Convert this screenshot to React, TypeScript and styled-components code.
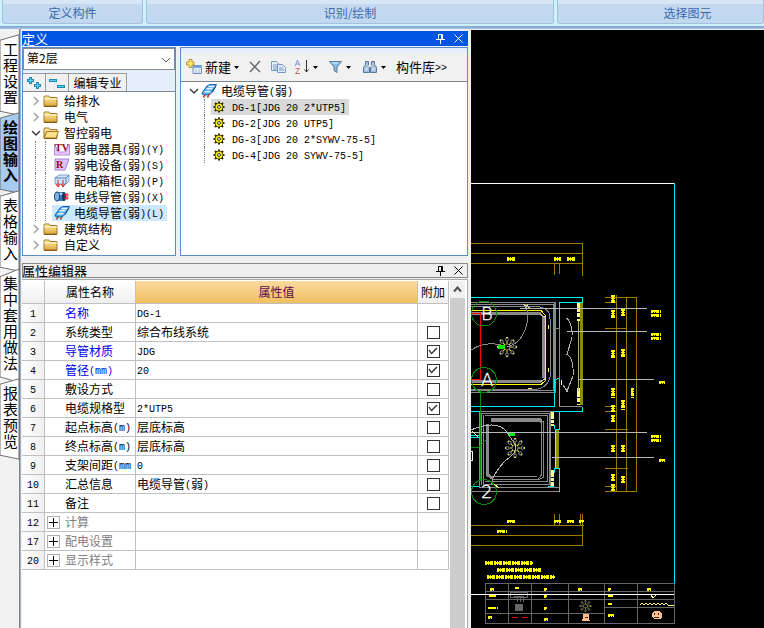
import React from 'react';
import styled, { createGlobalStyle, css } from 'styled-components';

const Global = createGlobalStyle`
  * { box-sizing: border-box; }
  body { margin: 0; background: #f0f0f0; color: #000; font: 12px/16px "Noto Sans CJK SC", sans-serif; overflow: hidden; }
  button, select, input { font: inherit; color: inherit; margin: 0; padding: 0; border: 0; background: none; }
`;

const Page = styled.div`display: flex; flex-direction: column; height: 100vh;`;
const Ribbon = styled.header`
  display: flex; gap: 3px; flex: none; height: 29px; padding: 0 0 3px 2px;
  background: linear-gradient(#cdf2fc 26px, #7da2ce 26px, #a9c4e4 29px);
`;
const RibbonGroup = styled.div<{ $basis: number; $grow?: boolean; $indent?: number }>`
  flex: ${p => (p.$grow ? '1 0' : '0 0')} ${p => p.$basis}px;
  height: 24px; padding: 4px 0 0 ${p => p.$indent || 0}px; text-align: center; line-height: 18px;
  color: #3b69b0; white-space: nowrap; overflow: hidden;
  border: solid #a3c0de; border-width: 0 1px 1px; border-radius: 0 0 3px 3px;
  background: linear-gradient(#d6e6f4 4px, #c1d8ef 4px);
`;
const Body = styled.div`display: flex; flex: 1; min-height: 0;`;

const Rail = styled.nav`
  flex: none; width: 20px; padding-top: 5px; border-right: 1px solid #808080;
  background: repeating-conic-gradient(#f7f7f7 0 25%, #ececec 0 50%) 0 0 / 2px 2px;
`;
const RailTab = styled.button<{ $active?: boolean }>`
  position: relative; display: block; width: 19px; padding: 7px 0 7px 3px;
  font-size: 15px; line-height: 16px; text-align: left; font-weight: ${p => (p.$active ? 700 : 400)};
  svg { position: absolute; inset: 0; width: 100%; height: 100%; overflow: visible; fill: ${p => (p.$active ? '#a6caf0' : '#fff')}; }
  span { position: relative; display: block; width: 16px; word-break: break-all; white-space: normal; }
`;

const Dock = styled.section`
  display: flex; flex-direction: column; flex: 0 0 451px; min-width: 0; padding: 2px 3px 0 1px;
  background: #f0f0f0; border-left: 1px solid #9db4d4;
`;
const TitleBar = styled.div<{ $active?: boolean }>`
  display: flex; align-items: center; flex: none; gap: 5px; padding-right: 3px; font-size: 13px; line-height: 15px; height: 15px;
  ${p => p.$active ? css`background: #0055e5; color: #fff;` : css`
    margin-top: 7px; background: #efefef; outline: 1px solid #8a8a8a; outline-offset: -1px;
  `}
  h2 { flex: 1; margin: 0; font: inherit; line-height: 13px; }
  button { display: flex; padding: 1px; }
`;
const Panes = styled.div`display: flex; gap: 4px; flex: none; height: 209px; margin-top: 1px;`;
const Pane = styled.div<{ $width?: number }>`
  display: flex; flex-direction: column; border: 1px solid #5a8cc8; min-width: 0; background: #e4eefc;
  flex: ${p => (p.$width ? `0 0 ${p.$width}px` : '1')};
`;
const Combo = styled.div`
  position: relative; flex: none; height: 22px; border: 1px solid #8c8c8c; background: #fff;
  select { width: 100%; height: 18px; padding-left: 3px; appearance: none; outline: 0; }
  svg { position: absolute; right: 3px; top: 8px; pointer-events: none; }
`;
const MiniBar = styled.div`display: flex; height: 18px; margin-top: 3px; flex: none;`;
const MiniButton = styled.button<{ $wide?: boolean }>`
  display: flex; align-items: center; justify-content: center; width: ${p => (p.$wide ? 58 : 23)}px;
  border: solid #9a9a9a; border-width: 1px 1px 0 0; background: #f0f0f0; white-space: nowrap; overflow: hidden; line-height: 17px;
`;
const Tree = styled.ul`
  flex: 1; margin: 0; padding: 1px 0; list-style: none; background: #fff; border-top: 1px solid #7f8790; overflow: hidden;
`;
const Node = styled.li`display: flex; align-items: center; height: 16px; padding-left: 7px;`;
const Guide = styled.i<{ $gap: number }>`
  width: ${p => p.$gap}px; height: 16px; border-left: 1px dotted #808080;
`;
const NodeButton = styled.button<{ $bg?: string; $gap?: number }>`
  display: flex; align-items: center; gap: ${p => p.$gap || 4}px; height: 16px; padding: 0 3px 0 2px; white-space: pre; line-height: 16px;
  background: ${p => p.$bg || 'none'};
  svg { flex: none; }
`;
const Twist = styled.span<{ $w?: number }>`display: flex; width: ${p => p.$w || 11}px; justify-content: center;`;

const Toolbar = styled.div`
  display: flex; align-items: center; flex: none; height: 28px; margin-top: 5px; padding-left: 5px; background: #f1f1f1;
`;
const Tool = styled.button<{ $w: number }>`
  display: flex; align-items: center; gap: 3px; width: ${p => p.$w}px; white-space: nowrap; font-size: 13px;
  svg { flex: none; }
`;

const GridArea = styled.div`
  display: flex; flex: 1; min-height: 0; margin-top: 1px; padding-right: 2px; background: #fff; border: solid #a8a8a8; border-width: 1px 1px 0 0;
`;
const Grid = styled.table`
  flex: 1; align-self: flex-start; margin-top: 1px; border-collapse: separate; border-spacing: 0; table-layout: fixed; width: 426px;
  th, td { height: 19px; padding: 0; border: solid #c0c0c0; border-width: 0 1px 1px 0; font-weight: 400; line-height: 16px; white-space: nowrap; overflow: hidden; }
  thead th { height: 23px; background: linear-gradient(#fff, #efefef); }
  thead th:nth-child(3) { background: linear-gradient(#fbd9a0, #f0c060); color: #5b0a4e; }
  tbody th { background: linear-gradient(90deg, #fff, #efefef); text-align: center; }
  td:nth-child(3) { padding-left: 1px; }
  td:last-child { text-align: center; }
`;
const NameCell = styled.div<{ $tone?: string }>`
  display: flex; align-items: center; height: 16px; padding-left: ${p => (p.$tone === 'group' ? 2 : 20)}px;
  color: ${p => (p.$tone === 'key' ? '#0000f0' : p.$tone === 'group' ? '#808080' : '#000')};
`;
const Expand = styled.button`
  display: flex; align-items: center; justify-content: center; width: 13px; height: 13px; margin-right: 5px; border: 1px solid #b0b0b0; flex: none;
`;
const Check = styled.input`
  display: block; width: 13px; height: 13px; border: 1px solid #333; appearance: none; background: #fff;
  &:checked::after {
    content: ''; display: block; width: 11px; height: 11px; background: #333;
    clip-path: polygon(1px 5px, 2px 4px, 4px 7px, 9px 2px, 10px 3px, 4px 9px);
  }
`;
const CheckCell = styled.div`display: flex; align-items: center; justify-content: center; height: 18px;`;
const ScrollTrack = styled.div`
  flex: 0 0 15px; margin: 1px 0 0 1px; background: #cdcdcd;
  button { display: flex; width: 15px; height: 17px; align-items: center; justify-content: center; background: #f0f0f0; }
`;
const Canvas = styled.main`flex: 1; min-width: 0; margin-top: 1px; background: #000; overflow: hidden; svg { display: block; }`;
const Latin = styled.span`padding-top: 3px; font: 10px/10px "Liberation Mono", monospace; white-space: pre;`;
const Run = styled.span`display: flex; align-items: center; height: 16px; line-height: 16px;`;
const Numeral = styled(Run)`justify-content: center;`;

const Mixed = ({ text, as: Wrap = Run }: { text: string; as?: React.ElementType }) => (
  <Wrap>{text.split(/([\x20-\x7e]+)/).filter(Boolean).map((part, i) =>
    /^[\x20-\x7e]/.test(part) ? <Latin key={i}>{part}</Latin> : <span key={i}>{part}</span>)}</Wrap>
);

const Chevron = ({ open }: { open?: boolean }) => (
  <svg width="10" height="10" fill="none" stroke={open ? '#404040' : '#a0a0a0'} strokeWidth="1.5">
    <path d={open ? 'M1 3l4 4 4-4' : 'M3 1l4 4-4 4'} />
  </svg>
);
const Folder = ({ open }: { open?: boolean }) => (
  <svg width="16" height="14" viewBox="0 0 16 14">
    <defs><linearGradient id="fold" x2="0" y2="1"><stop stopColor="#fff0b0" /><stop offset="1" stopColor="#dba63c" /></linearGradient></defs>
    <path d="M1 12V3q0-1 1-1h4l1 1.500h7v8.500z" fill="url(#fold)" stroke="#a37520" />
    {open ? <path d="M1 12l3-6.500h11.500L13 12z" fill="#ffe08a" stroke="#a37520" />
      : <path d="M1 5h13" stroke="#fff4c8" />}
    <path d="M1 12.500h13" stroke="#8a5b14" />
  </svg>
);
const Gear = () => (
  <svg width="12" height="12" viewBox="0 0 12 12">
    <circle cx="6" cy="6" r="4" fill="#f4ec20" stroke="#444400" />
    <path d="M6 .5v11M.5 6h11M2 2l8 8M10 2l-8 8" stroke="#2c2c00" strokeWidth="2" />
    <circle cx="6" cy="6" r="3.500" fill="#ffee20" />
    <circle cx="6" cy="6" r="1.500" fill="#fff" stroke="#333" />
  </svg>
);
const Tray = () => (
  <svg width="16" height="14" viewBox="0 0 16 14">
    <path d="M1 9L6 2 9 .5h6.500L11.500 8 8 11H2z" fill="#4fa8ea" stroke="#1d5fae" />
    <path d="M5.500 5l6-.5M3.500 8l6-.5M7.500 2.500h6" stroke="#e9f7ff" strokeWidth="1.500" />
    <path d="M11 8l4-6" stroke="#123f80" />
    <path d="M4 10l-1 3.500M8 10l-1 3.500M2 12l1 1.500M6 12l1 1.500" stroke="#e02020" fill="none" />
  </svg>
);
const Device = ({ kind }: { kind: 'tv' | 'r' | 'box' | 'wire' | 'tray' }) => {
  if (kind === 'tray') return <Tray />;
  const letter = { fill: '#a00010', fontFamily: '"Liberation Serif", serif', fontWeight: 700, fontSize: 10 };
  return (
    <svg width="16" height="14" viewBox="0 0 16 14">
      {kind === 'tv' && <><path d="M.5 2v11h15V2l-4 8H4z" fill="#e6c8fa" stroke="#b888dc" /><text x="1" y="9" {...letter}>TV</text></>}
      {kind === 'r' && <><path d="M1 1h14l-4 11H1z" fill="#dcc0fa" stroke="#a884d0" /><text x="2" y="10" {...letter}>R</text></>}
      {kind === 'box' && <>
        <path d="M1 4l4-3h10v6l-3 3H1z" fill="#cfe4fa" stroke="#7f9fc8" /><path d="M1 4h11v6M12 4l3-3" fill="none" stroke="#5b80b8" />
        <path d="M4 6v7M9 6v7M2 10l2 3 2-3M7 10l2 3 2-3" fill="none" stroke="#e02020" />
      </>}
      {kind === 'wire' && <>
        <path d="M3 2h7v9H3z" fill="#3c78b8" /><path d="M3 4h7" stroke="#b8dcf8" strokeWidth="2" />
        <ellipse cx="3" cy="6.500" rx="2.500" ry="4.500" fill="#7ab2e6" stroke="#183c70" /><ellipse cx="10" cy="6.500" rx="2" ry="4.500" fill="#123a68" />
        <path d="M10 5h5M10 8h5M13 3v7" stroke="#f02020" />
      </>}
    </svg>
  );
};
const Pin = () => <svg width="11" height="11" fill="none" stroke="currentColor"><path d="M3.500 6V1.500h4V6M1 6.500h9M5.500 6.500V11M6.500 2v4" /></svg>;
const Close = () => <svg width="11" height="11" stroke="currentColor"><path d="M1.500 1.500l8 8M9.500 1.500l-8 8" /></svg>;
const Caret = () => <svg width="5" height="3"><path d="M0 0h5L2.500 3z" fill="#000" /></svg>;

const NewIcon = () => (
  <svg width="16" height="16" viewBox="0 0 16 16">
    <path d="M7 6.500h8.500v8H7z" fill="#e4eef9" stroke="#6b90c0" /><path d="M7 8h9" stroke="#7ba4d8" strokeWidth="2" />
    <path d="M9 11h2M12 11h2M9 13h2M12 13h2" stroke="#a6bedc" />
    <path d="M3 .5h3V3h2v3H6v2.500H3V6H.5V3H3z" fill="#ffe774" stroke="#b59530" />
  </svg>
);
const DeleteIcon = () => <svg width="14" height="14" stroke="#6d6d6d" strokeWidth="1.500"><path d="M2 2l10 10M12 1L2 12" /></svg>;
const CopyIcon = () => (
  <svg width="16" height="14" viewBox="0 0 16 14" fill="#e3edf9" stroke="#7898c4">
    <path d="M.5 1.500h5l3 3v6h-8z" /><path d="M2 5h4M2 7h4M2 9h4" /><path d="M6.500 4.500h5l3 3v5h-8z" /><path d="M8 8h4M8 10h5" />
  </svg>
);
const SortIcon = () => (
  <svg width="16" height="16" viewBox="0 0 16 16" fill="none">
    <path d="M1 7l2.500-6L6 7M2 5h3" stroke="#7c9bc8" /><path d="M1.500 9.500h4l-4 5h4.500" stroke="#c86e70" />
    <path d="M12.500 1v12M10.500 10.500l2 2.500 2-2.500" stroke="#303030" />
  </svg>
);
const FilterIcon = () => <svg width="14" height="14"><path d="M.5 1.500h12L8 7v5.500l-3-2V7z" fill="#88bce0" stroke="#557da5" /><path d="M3 3h6" stroke="#e0f2ff" /></svg>;
const FindIcon = () => (
  <svg width="16" height="14" viewBox="0 0 16 14" fill="#a8c0e0" stroke="#57759f">
    <path d="M3.500 1.500h3v4l1 2v5h-6v-5l2-3zM9.500 1.500h3v3l2 3v5h-6v-5l1-2z" /><path d="M6 6h4M3 9h3M10 9h3" stroke="#eef5ff" />
  </svg>
);

const railTabs = ['工程设置', '绘图输入', '表格输入', '集中套用做法', '报表预览'];
const leaves: [React.ComponentProps<typeof Device>['kind'], string][] = [
  ['tv', '弱电器具(弱)(Y)'], ['r', '弱电设备(弱)(S)'], ['box', '配电箱柜(弱)(P)'], ['wire', '电线导管(弱)(X)'], ['tray', '电缆导管(弱)(L)'],
];
const parts = ['DG-1[JDG 20 2*UTP5]', 'DG-2[JDG 20 UTP5]', 'DG-3[JDG 20 2*SYWV-75-5]', 'DG-4[JDG 20 SYWV-75-5]'];
const rows: { n: number; name: string; value?: string; tone?: string; check?: boolean }[] = [
  { n: 1, name: '名称', value: 'DG-1', tone: 'key' },
  { n: 2, name: '系统类型', value: '综合布线系统', check: false },
  { n: 3, name: '导管材质', value: 'JDG', tone: 'key', check: true },
  { n: 4, name: '管径(mm)', value: '20', tone: 'key', check: true },
  { n: 5, name: '敷设方式', check: false },
  { n: 6, name: '电缆规格型', value: '2*UTP5', check: true },
  { n: 7, name: '起点标高(m)', value: '层底标高', check: false },
  { n: 8, name: '终点标高(m)', value: '层底标高', check: false },
  { n: 9, name: '支架间距(mm', value: '0', check: false },
  { n: 10, name: '汇总信息', value: '电缆导管(弱)', check: false },
  { n: 11, name: '备注', check: false },
  { n: 12, name: '计算', tone: 'group' },
  { n: 17, name: '配电设置', tone: 'group' },
  { n: 20, name: '显示样式', tone: 'group' },
];

const FolderNode = ({ label, open }: { label: string; open?: boolean }) => (
  <Node>
    <Twist><Chevron open={open} /></Twist>
    <NodeButton $gap={5}><Folder open={open} />{label}</NodeButton>
  </Node>
);

/* Tiny annotations on the plan: [x, y, length, vertical, thickness] */
const marks: [number, number, number, boolean, number][] = [
  [507, 259, 9, false, 4], [554, 259, 7, false, 4], [567, 259, 8, false, 4],
  [613, 295, 8, true, 4], [613, 310, 9, true, 4], [613, 350, 8, true, 4], [613, 388, 10, true, 4],
  [623, 309, 7, true, 4], [623, 349, 9, true, 4], [632, 388, 10, true, 3], [623, 400, 10, true, 4],
  [613, 405, 7, true, 4], [613, 415, 7, true, 4], [613, 445, 7, true, 4], [623, 445, 7, true, 4],
  [613, 474, 7, true, 4], [613, 484, 7, true, 4], [623, 476, 7, true, 4],
  [651, 311, 10, false, 3], [651, 315, 10, false, 3], [651, 334, 10, false, 3], [651, 338, 10, false, 3],
  [659, 382, 6, false, 3], [651, 436, 10, false, 3], [651, 440, 10, false, 3], [659, 460, 6, false, 3],
  [507, 521, 9, false, 3], [554, 521, 7, false, 3], [567, 521, 7, false, 3], [579, 521, 5, false, 3], [497, 531, 10, false, 3],
  [485, 563, 48, false, 4], [497, 570, 44, false, 4], [487, 577, 68, false, 4],
  [490, 589, 4, false, 3], [515, 588, 4, false, 2], [544, 589, 3, false, 3], [578, 589, 4, false, 3], [608, 589, 3, false, 3], [647, 589, 4, false, 3],
  [489, 596, 7, false, 2], [544, 596, 3, false, 3], [608, 596, 5, false, 2], [488, 608, 10, false, 2], [544, 608, 3, false, 3],
  [608, 604, 4, false, 2], [488, 617, 4, false, 3], [544, 619, 4, false, 3], [608, 615, 6, false, 3],
];
const Chandelier = ({ x, y }: { x: number; y: number }) => (
  <g transform={`translate(${x} ${y})`} fill="none" shapeRendering="auto">
    {[0, 45, 90, 135, 180, 225, 270, 315].map(a => (
      <g key={a} transform={`rotate(${a})`}><circle cx="7.500" r="1.500" stroke="#888" /><path d="M2.500 0h3M9.500-1v2" stroke="#eeee40" /></g>
    ))}
    <circle r="3" stroke="#888" strokeDasharray="2 1" />
  </g>
);
const Plan = () => (
  <svg width="293" height="598" viewBox="471 30 293 598" fill="none" stroke="#8a8a8a" shapeRendering="crispEdges" role="img" aria-label="CAD">
    <path stroke="#fff" d="M471 183.500h203" />
    <path stroke="#00f0f0" d="M674.500 183v400M471 297.500h111.500v5M582 302.500h-22.500V328M554.500 380v26.500H471M559.500 379v27M471 411.500h111.500v-5M559.500 411v18M554.500 429.500h5M554.500 429v-4M554.500 468v5M554.500 468.500h5v23M471 486.500h9M548 486.500h6M554.500 379.500l5-1" />
    <path stroke="#a07800" d="M471 243.500h111.500v32M471 253.500h111M471 263.500h111M554.500 263v12M559.500 263v11M616.500 295v197M626.500 297v195M605 297.500h31.500v194H605M605 302.500h12M605 328.500h22M605 406.500h12M605 411.500h12M605 429.500h23M605 468.500h23M605 486.500h12M471 525.500h113M471 535.500h111M471 545.500h111.500V514M554.500 514v11M559.500 514v11M580.500 514v11" />
    <path d="M471 302.500h84.500v90H471M471 304.500h82.500v86H471M554 328.500h5M559 406.500h23M559.500 328v51M554.500 302v77" />
    <path strokeWidth="3" d="M471 313.500h70M543.500 316v62M541 381.500h-70" />
    <path strokeWidth="1" d="M471 306.500h63q16 0 16 12l1 50q0 21-18 21h-62" />
    <path stroke="#ffff00" d="M471 310.500h70l4.500 5v65l-4.500 4h-70" />
    <path stroke="#ff0000" d="M471 313.500h9.500v66H471" />
    <path d="M526 307q4 10-1 23-5 14-18 17M471 350q14-9 30-5" strokeWidth="1" />
    <path d="M523 304l8 5M525 309l3-5M540 314l6 4M540 382l6-4" stroke="#d0d090" />
    <Chandelier x={507} y={347} />
    <path fill="#00ee00" stroke="none" d="M498 345h7v4h-7zM508 432h7v4h-7z" />
    <path d="M567 318q6 7 5 20l-5 16q7 5 6 22l-6 15-4-6M566 318h2M566 354h2M566 391h2" stroke="#b0b0b0" />
    <path stroke="#8c8c00" strokeWidth="3" d="M581.500 303v102" />
    <path stroke="#ffff80" strokeWidth="3" strokeDasharray="9 1 4 2" d="M578.500 303v18M578.500 388v17" />
    <path stroke="#b0b070" d="M578.500 321v70" />
    <path stroke="#ffff80" d="M548.500 325v4M548.500 368v4M528 388.500h4M561.500 380v5" />
    <path d="M479.500 411v76h79M481.500 413v72M483.500 415v69M479 411.500h75M482 413.500h67v71h-66M485 415.500h62v66h-62M471 491.500h88M550.500 411v75" />
    <path strokeWidth="3" d="M491 419.500h49l2 3M487.500 424v51l5 3" />
    <path d="M541.500 421v54l-3 4h-46M543.500 421v56l-5 3M491 421.500h49M491 476.500h46" />
    <path stroke="#8c8c00" strokeWidth="3" d="M557.500 430v38" /><path stroke="#e8e830" d="M555.500 430v38" />
    <path stroke="#ffff90" strokeWidth="3" d="M552.500 412v14M552.500 470v16" strokeDasharray="7 1 3 1" />
    <path stroke="#b8b8b8" d="M520 308.500h127M567 331.500h80M578 379.500h76M471 432.500h176M552 457.500h102" />
    <path stroke="#b8b8b8" d="M471 430q26-11 36 2l9 14q0 8-10 14-12 12-15 24" />
    <Chandelier x={515} y={448} />
    <g stroke="#008c00"><circle cx="484" cy="313.500" r="12.500" /><circle cx="484" cy="380" r="12.500" /><circle cx="484" cy="492" r="12.500" /><path d="M480.500 390v90M471 447h8l7-7" /></g>
    <path stroke="#00f0f0" d="M471 435.500h8M471 437.500h8" /><path stroke="#ffff80" d="M472 431l6 6M494 484l5 4" />
    <path stroke="#fff" d="M471 451.500h1v9h-1" />
    <g fill="#fff" stroke="#fff" strokeWidth=".3" fontFamily='"DejaVu Sans", sans-serif' fontWeight="200" fontSize="18"><text x="481" y="320">B</text><text x="481" y="386">A</text><text x="481" y="498">2</text></g>
    <g stroke="#ffff00">
      {marks.map(([x, y, len, vertical, thick], i) => (
        <g key={i}>
          <path strokeWidth={thick} strokeDasharray="2 1 1 1 3 1" d={`M${x} ${y}${vertical ? 'v' : 'h'}${len}`} />
          <path strokeWidth="2" strokeDasharray="3 1 4 1" d={vertical ? `M${x} ${y}v${len}` : `M${x} ${y}h${len}`} />
        </g>
      ))}
    </g>
    <g stroke="#666">
      <path d="M485.500 583.500h189v40h-189zM508.500 583v40M531.500 583v40M568.500 583v40M604.500 583v40M637.500 583v40M485 591.500h189M485 599.500h189M485 613.500h119M604 607.500h70" />
      <path d="M510.500 592.500h17v5h-17zM514 596h10M517 598v4M520 598v4M523 598v4" /><path fill="#666" d="M515.500 604.500h7v6h-7z" />
    </g>
    <path stroke="#f00000" d="M512 617.500h6M522 617.500h6" />
    <path stroke="#fff" d="M471 594.500h203" />
    <g transform="translate(585.500 606) scale(.6)"><Chandelier x={0} y={0} /></g>
    <path stroke="#ffff80" d="M640 605l2-2 2 2 2-2 2 2 2-2 2 2 2-2 2 2 2-2 2 2 2-2 2 2 2-2 2 2h6M651 595l2 3 3-3" />
    <path fill="#ffc090" stroke="none" d="M583 614h6v4l1 3h-8l1-3zM654 611h6l2 3v3l-2 2h-6l-2-2v-3z" />
    <path stroke="#402010" d="M654.500 613v2M658.500 613v2M654 617h5M585 617h3" />
  </svg>
);

export default function App() {
  return (
    <Page>
      <Global />
      <Ribbon>
        <RibbonGroup $basis={141}>定义构件</RibbonGroup>
        <RibbonGroup $basis={408}>识别/绘制</RibbonGroup>
        <RibbonGroup $basis={207} $grow $indent={54}>选择图元</RibbonGroup>
      </Ribbon>
      <Body>
        <Rail>
          {railTabs.map((label, i) => (
            <RailTab key={label} $active={i === 1}>
              <svg viewBox="0 0 19 100" preserveAspectRatio="none">
                <path d="M0 8L19 1V104L0 99z" stroke="#707070" vectorEffect="non-scaling-stroke" />
              </svg>
              <span>{label}</span>
            </RailTab>
          ))}
        </Rail>
        <Dock>
          <TitleBar $active><h2>定义</h2><button aria-label="固定"><Pin /></button><button aria-label="关闭"><Close /></button></TitleBar>
          <Panes>
            <Pane $width={154}>
              <Combo>
                <select aria-label="楼层"><option>第2层</option></select>
                <svg width="10" height="7" fill="none" stroke="#555"><path d="M1 1l4 4 4-4" /></svg>
              </Combo>
              <MiniBar>
                <MiniButton aria-label="全部展开"><svg width="16" height="14" stroke="#2089b8" strokeWidth="3"><path d="M1 4.500h7M4.500 1v7M8 9.500h7M11.500 6v7" /><path stroke="#55d4f4" strokeWidth="1" d="M2 4.500h5M4.500 2v5M9 9.500h5M11.500 7v5" /></svg></MiniButton>
                <MiniButton aria-label="全部折叠"><svg width="16" height="14" stroke="#2089b8" strokeWidth="3"><path d="M0 4.500h8M8 10.500h8" /><path stroke="#55d4f4" strokeWidth="1" d="M1 4.500h6M9 10.500h6" /></svg></MiniButton>
                <MiniButton $wide>编辑专业</MiniButton>
              </MiniBar>
              <Tree>
                <FolderNode label="给排水" /><FolderNode label="电气" /><FolderNode label="智控弱电" open />
                {leaves.map(([kind, label]) => (
                  <Node key={label}>
                    <Twist $w={5} /><Guide $gap={10} /><Guide $gap={7} />
                    <NodeButton $bg={kind === 'tray' ? '#cce8ff' : undefined}><Device kind={kind} /><Mixed text={label} /></NodeButton>
                  </Node>
                ))}
                <FolderNode label="建筑结构" /><FolderNode label="自定义" />
              </Tree>
            </Pane>
            <Pane>
              <Toolbar>
                <Tool $w={62}><NewIcon />新建<Caret /></Tool>
                <Tool $w={23} aria-label="删除"><DeleteIcon /></Tool>
                <Tool $w={23} aria-label="复制"><CopyIcon /></Tool>
                <Tool $w={35} aria-label="排序"><SortIcon /><Caret /></Tool>
                <Tool $w={33} aria-label="过滤"><FilterIcon /><Caret /></Tool>
                <Tool $w={34} aria-label="查找"><FindIcon /><Caret /></Tool>
                <Tool $w={60}><Mixed text="构件库>>" /></Tool>
              </Toolbar>
              <Tree>
                <Node><Twist><Chevron open /></Twist><NodeButton $gap={4}><Tray /><Mixed text="电缆导管(弱)" /></NodeButton></Node>
                {parts.map((label, i) => (
                  <Node key={label}>
                    <Twist $w={16} /><Guide $gap={7} />
                    <NodeButton $gap={7} $bg={i === 0 ? '#d9d9d9' : undefined}><Gear /><Mixed text={label} /></NodeButton>
                  </Node>
                ))}
              </Tree>
            </Pane>
          </Panes>
          <TitleBar><h2>属性编辑器</h2><button aria-label="固定"><Pin /></button><button aria-label="关闭"><Close /></button></TitleBar>
          <GridArea>
            <Grid>
              <colgroup><col width="23" /><col width="91" /><col /><col width="31" /></colgroup>
              <thead><tr><th /><th>属性名称</th><th>属性值</th><th>附加</th></tr></thead>
              <tbody>
                {rows.map(r => (
                  <tr key={r.n}>
                    <th><Mixed as={Numeral} text={String(r.n)} /></th>
                    <td><NameCell $tone={r.tone}>
                      {r.tone === 'group' && <Expand aria-label={`展开${r.name}`}><svg width="9" height="9" stroke="#000"><path d="M0 4.500h9M4.500 0v9" /></svg></Expand>}
                      <Mixed text={r.name} />
                    </NameCell></td>
                    <td><Mixed text={r.value || ''} /></td>
                    <td>{r.check !== undefined && <CheckCell><Check type="checkbox" defaultChecked={r.check} aria-label={`${r.name}附加`} /></CheckCell>}</td>
                  </tr>
                ))}
              </tbody>
            </Grid>
            <ScrollTrack><button aria-label="向上滚动"><svg width="9" height="7" fill="none" stroke="#505050" strokeWidth="2"><path d="M1 5.500l3.500-4 3.500 4" /></svg></button></ScrollTrack>
          </GridArea>
        </Dock>
        <Canvas><Plan /></Canvas>
      </Body>
    </Page>
  );
}
